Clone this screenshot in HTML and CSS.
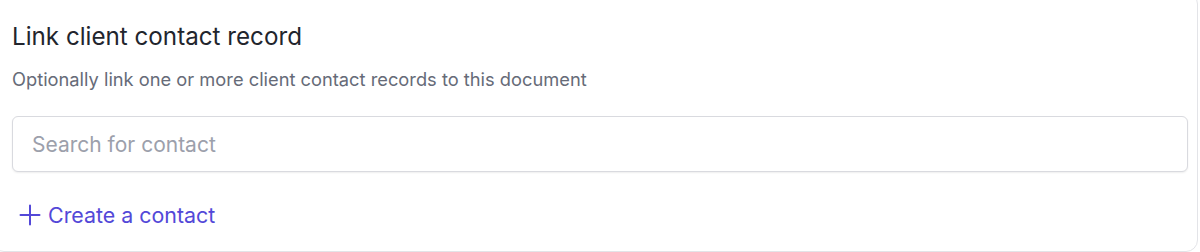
FILE: index.html
```html
<!DOCTYPE html>
<html lang="en">
<head>
<meta charset="utf-8">
<title>Link client contact record</title>
<link rel="stylesheet" href="styles.css">
</head>
<body>
<section class="card">
  <h2 class="title">Link client contact record</h2>
  <p class="subtitle">Optionally link one or more client contact records to this document</p>
  <div class="search">
    <input class="search-input" type="text" placeholder="Search for contact">
  </div>
  <button class="create" type="button">
    <svg class="plus" viewBox="0 0 24 24" width="24" height="24" fill="none" stroke="currentColor" stroke-width="2" stroke-linecap="round" stroke-linejoin="round" aria-hidden="true"><path d="M12 2.5v19M2.5 12h19"/></svg>
    <span>Create a contact</span>
  </button>
</section>
</body>
</html>
```
FILE: styles.css
```css
* { box-sizing: border-box; }
html, body { margin: 0; padding: 0; background: #ffffff; }
body {
  font-family: Inter, "Noto Sans", "Liberation Sans", sans-serif;
  overflow: hidden;
}
.card {
  margin: -8px 2px 0 -8px;
  height: 260px;
  border: 1px solid #e3e4e8;
  border-radius: 12px;
  background: #ffffff;
  padding: 27px 9px 0 19px;
  display: flex;
  flex-direction: column;
}
.title {
  margin: 0;
  font-size: 24.2px;
  line-height: 33px;
  font-weight: 400;
  color: #22252d;
}
.subtitle {
  margin: 14px 0 0;
  font-size: 18.3px;
  line-height: 24px;
  color: #666b78;
}
.search {
  margin-top: 25px;
}
.search-input {
  display: block;
  width: 100%;
  height: 56px;
  border: 1px solid #d9dadf;
  border-radius: 6px;
  padding: 0 19px;
  font-family: inherit;
  font-size: 21px;
  color: #1f2430;
  background: #ffffff;
  box-shadow: 0 1px 2px rgba(0, 0, 0, 0.07);
  outline: none;
}
.search-input::placeholder { color: #9ca0ab; }
.create {
  margin-top: 29px;
  align-self: flex-start;
  display: flex;
  align-items: center;
  gap: 6px;
  padding: 0 0 0 6px;
  border: 0;
  background: none;
  font-family: inherit;
  font-size: 21.4px;
  line-height: 28px;
  color: #5348d8;
  cursor: pointer;
}
.plus { display: block; width: 24px; height: 24px; }
```
